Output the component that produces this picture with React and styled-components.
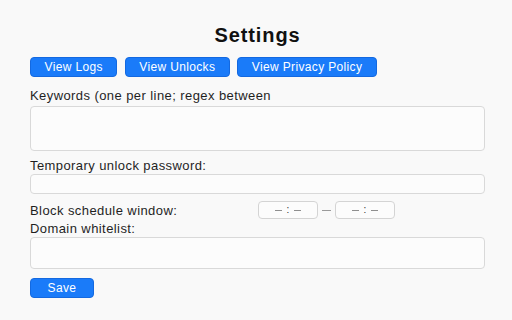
import React from "react";
import styled, { createGlobalStyle } from "styled-components";

const Global = createGlobalStyle`
  html, body { margin: 0; padding: 0; background: #f9f9f9; }
  body { font-family: "Liberation Sans", Arial, sans-serif; color: #1f1f1f; }
  * { box-sizing: border-box; }
`;

const Page = styled.div`
  width: 512px;
  height: 320px;
  padding: 24px 27px 0 30px;
  display: flex;
  flex-direction: column;
`;

const Title = styled.h1`
  margin: 0;
  font-size: 20px;
  line-height: 22px;
  font-weight: 700;
  letter-spacing: 0.9px;
  text-align: center;
  color: #111;
`;

const Toolbar = styled.div`
  display: flex;
  gap: 7.5px;
  margin-top: 11px;
`;

const Button = styled.button`
  height: 20px;
  min-width: 64px;
  padding: 0 13.5px;
  border: 1px solid #1469e0;
  border-radius: 4px;
  background: #1a7bf9;
  color: #fff;
  font-family: inherit;
  font-size: 12px;
  line-height: 18px;
  letter-spacing: 0.35px;
  cursor: pointer;
`;

const Label = styled.label`
  display: block;
  margin-top: ${(p) => p.$mt}px;
  font-size: 13px;
  line-height: 15px;
  letter-spacing: 0.42px;
  color: #1f1f1f;
`;

const Area = styled.textarea`
  display: block;
  width: 100%;
  height: ${(p) => p.$h}px;
  margin-top: ${(p) => p.$mt}px;
  border: 1px solid #d9d9d9;
  border-radius: 4px;
  background: #fcfcfc;
  resize: none;
  outline: none;
`;

const TextInput = styled.input`
  display: block;
  width: 100%;
  height: 20px;
  margin-top: 1px;
  border: 1px solid #d9d9d9;
  border-radius: 4px;
  background: #fcfcfc;
  outline: none;
`;

const ScheduleRow = styled.div`
  display: flex;
  align-items: center;
  margin-top: 7px;
  height: 18px;
`;

const RowLabel = styled.span`
  width: 228px;
  font-size: 13px;
  line-height: 15px;
  letter-spacing: 0.42px;
  color: #1f1f1f;
`;

const TimeField = styled.div`
  width: 60px;
  height: 18px;
  border: 1px solid #d4d4d4;
  border-radius: 4px;
  background: #fcfcfc;
  display: flex;
  align-items: center;
  justify-content: center;
  gap: 5px;
  font-size: 10px;
  color: #8a8a8a;
`;

const Dash = styled.span`
  display: inline-block;
  width: 7px;
  height: 1px;
  background: #8f8f8f;
`;

const Colon = styled.span`
  color: #333;
  font-size: 10px;
  line-height: 10px;
`;

const Between = styled.span`
  display: inline-block;
  width: 9px;
  height: 1px;
  margin: 0 4px;
  background: #9a9a9a;
`;

const SaveRow = styled.div`
  margin-top: 9px;
`;

const Time = () => (
  <TimeField>
    <Dash />
    <Colon>:</Colon>
    <Dash />
  </TimeField>
);

export default function App() {
  return (
    <>
      <Global />
      <Page>
        <Title>Settings</Title>
        <Toolbar>
          <Button>View Logs</Button>
          <Button>View Unlocks</Button>
          <Button>View Privacy Policy</Button>
        </Toolbar>
        <Label $mt={11}>Keywords (one per line; regex between</Label>
        <Area $h={45} $mt={3} />
        <Label $mt={7}>Temporary unlock password:</Label>
        <TextInput type="password" />
        <ScheduleRow>
          <RowLabel>Block schedule window:</RowLabel>
          <Time />
          <Between />
          <Time />
        </ScheduleRow>
        <Label $mt={2}>Domain whitelist:</Label>
        <Area $h={32} $mt={1} />
        <SaveRow>
          <Button>Save</Button>
        </SaveRow>
      </Page>
    </>
  );
}
